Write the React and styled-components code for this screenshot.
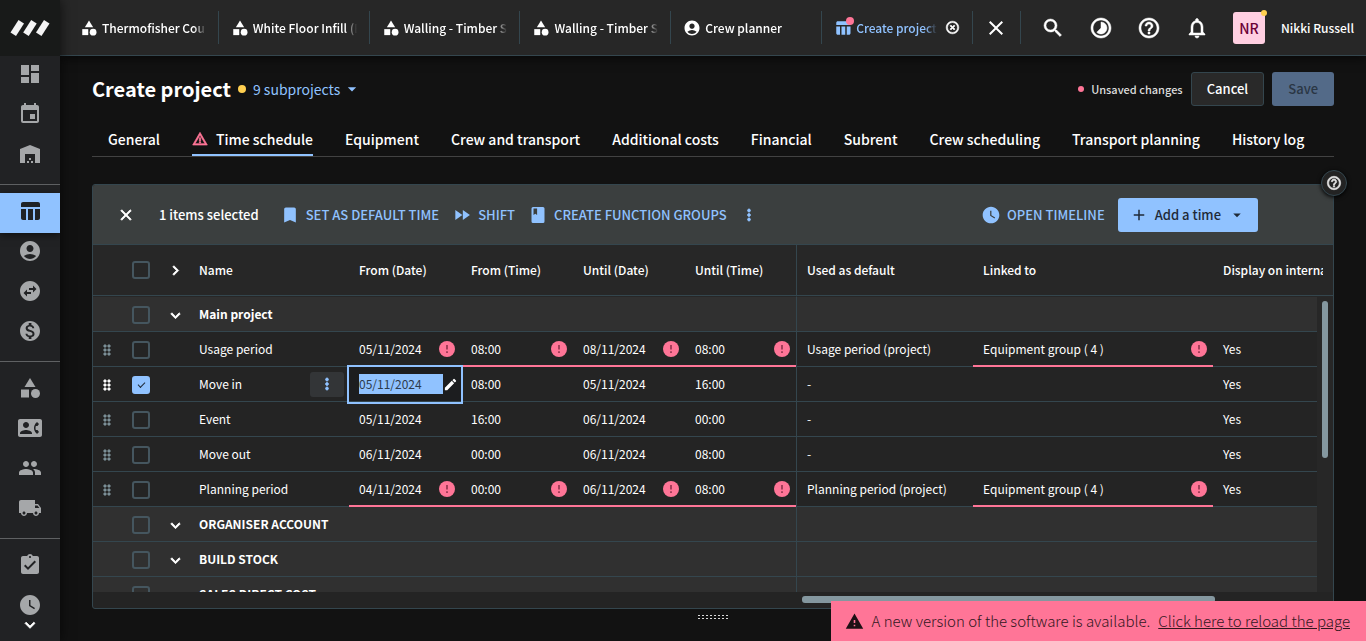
import React from "react";
import styled, { createGlobalStyle, css } from "styled-components";
import {
  MdAccountCircle,
  MdAdd,
  MdArrowDropDown,
  MdAssignmentTurnedIn,
  MdBookmark,
  MdCategory,
  MdChevronRight,
  MdClose,
  MdContactPhone,
  MdDashboard,
  MdDragIndicator,
  MdEdit,
  MdEvent,
  MdExpandMore,
  MdFastForward,
  MdHelpOutline,
  MdHighlightOff,
  MdLocalShipping,
  MdMonetizationOn,
  MdMoreVert,
  MdNotificationsNone,
  MdPeople,
  MdSearch,
  MdSwapHorizontalCircle,
  MdTableChart,
  MdTimelapse,
  MdWarehouse,
  MdWarning,
  MdWarningAmber,
  MdWatchLater,
} from "react-icons/md";

const c = {
  page: "#121212",
  bar: "#272727",
  side: "#212224",
  line: "#34464e",
  blue: "#90c2ff",
  pink: "#ff7597",
  yellow: "#ffcf50",
  ink: "#1f2a38",
  row: "#242424",
  group: "#303030",
  thumb: "#84979f",
};

const heavyIcon = css`
  path:not([fill="none"]) {
    stroke: currentColor;
    stroke-width: 1px;
  }
`;

const Global = createGlobalStyle`
  *, *::before, *::after { box-sizing: border-box; }
  body {
    margin: 0;
    background: ${c.page};
    color: #fff;
    font: 500 12px/20px "Noto Sans CJK SC", "Noto Sans", sans-serif;
  }
  button, input { font: inherit; color: inherit; }
  button { border: 0; padding: 0; background: none; }
  a { color: inherit; text-decoration: none; }
  svg { display: block; flex: none; }
`;

const Shell = styled.div`
  display: flex;
  height: 100vh;
`;

const Sidebar = styled.nav`
  position: relative;
  z-index: 3;
  flex: none;
  width: 60px;
  overflow: hidden;
  background: ${c.side};
`;

const SideShade = styled.div`
  z-index: 2;
  display: flex;
  flex: none;
  box-shadow: 0 0 12px #000a;
`;

const LogoBox = styled.a`
  display: grid;
  place-items: center;
  height: 56px;
  background: #181a19;
`;

const SideGroup = styled.div`
  & + & {
    margin-top: 8px;
    padding-top: 8px;
    border-top: 1px solid #5f6163;
  }
`;

const SideItem = styled.a`
  display: flex;
  align-items: center;
  justify-content: center;
  height: 40px;
  padding-bottom: 4px;
  font-size: 24px;
  color: ${(p) => (p.$active ? "#1f2226" : "#a5a7a9")};
  background: ${(p) => (p.$active ? c.blue : "none")};
  box-shadow: ${(p) => (p.$active ? "0 2px 8px #0008" : "none")};
`;

const SideMore = styled.button`
  position: absolute;
  bottom: 6px;
  left: 20px;
  font-size: 20px;
  ${heavyIcon}
`;

const Page = styled.div`
  display: flex;
  flex: 1;
  flex-direction: column;
  min-width: 0;
`;

const TopBar = styled.header`
  position: relative;
  z-index: 1;
  display: flex;
  flex: none;
  align-items: center;
  height: 56px;
  padding-left: 8px;
  background: ${c.bar};
  border-bottom: 1px solid ${c.line};
  box-shadow: 0 2px 10px #000a;
`;

const OpenTab = styled.a`
  position: relative;
  display: flex;
  flex: 1;
  align-items: center;
  min-width: 0;
  height: 33px;
  padding: 0 12px;
  gap: 4px;
  border-right: 1px solid ${c.line};
  color: ${(p) => (p.$active ? c.blue : "#fff")};
  > svg { font-size: 18px; }
`;

const TabText = styled.span`
  flex: 1;
  overflow: hidden;
  white-space: nowrap;
  mask-image: linear-gradient(to left, transparent, #000 12px);
`;

const TabClose = styled.button`
  margin-left: 4px;
  font-size: 15px;
  color: #fff;
  ${heavyIcon}
`;

const Badge = styled.i`
  position: absolute;
  top: ${(p) => p.$top}px;
  left: ${(p) => p.$left}px;
  width: ${(p) => p.$size}px;
  height: ${(p) => p.$size}px;
  border-radius: 50%;
  background: ${(p) => p.$color};
`;

const CloseAll = styled.button`
  display: grid;
  place-items: center;
  width: 48px;
  height: 33px;
  border-right: 1px solid ${c.line};
  font-size: 24px;
`;

const TopActions = styled.div`
  display: flex;
  align-items: center;
  gap: 24px;
  padding: 0 24px 0 20px;
  font-size: 24px;
  ${heavyIcon}
  path:not([fill="none"]) { stroke-width: 0.5px; }
`;

const Account = styled.button`
  display: flex;
  align-items: center;
  gap: 16px;
  padding-right: 12px;
  white-space: nowrap;
`;

const Avatar = styled.span`
  position: relative;
  display: grid;
  place-items: center;
  width: 32px;
  height: 32px;
  border-radius: 3px;
  background: #ffcfe1;
  color: #6b0035;
  font-size: 14px;
`;

const Main = styled.main`
  position: relative;
  display: flex;
  flex: 1;
  flex-direction: column;
  min-height: 0;
  padding: 16px 32px 32px;
`;

const TitleRow = styled.div`
  display: flex;
  align-items: center;
`;

const Title = styled.h1`
  margin: 0;
  font-size: 20px;
  line-height: 32px;
  font-weight: 700;
`;

const Dot = styled.i`
  width: ${(p) => p.$size}px;
  height: ${(p) => p.$size}px;
  margin: 0 7px;
  border-radius: 50%;
  background: ${(p) => p.$color};
`;

const Subprojects = styled.button`
  display: flex;
  align-items: center;
  gap: 2px;
  margin-right: auto;
  color: ${c.blue};
  font-size: 14px;
  font-weight: 400;
  svg { font-size: 20px; }
`;

const Unsaved = styled.span`
  font-size: 11px;
  color: #dcdcdc;
`;

const Button = styled.button`
  display: flex;
  align-items: center;
  height: 34px;
  margin-left: 8px;
  padding: 0 15px;
  border: 1px solid ${(p) => (p.$plain ? c.line : "transparent")};
  border-radius: 3px;
  background: ${(p) => (p.$plain ? "#292929" : c.blue)};
  color: ${(p) => (p.$plain ? "#fff" : c.ink)};
  font-size: 13px;
  white-space: nowrap;
  &:disabled { background: #536a88; color: #2a3644; }
`;

const SectionTabs = styled.nav`
  display: flex;
  gap: 32px;
  margin: 18px 0 27px;
  padding-left: 16px;
  border-bottom: 1px solid #424242;
`;

const SectionTab = styled.a`
  display: flex;
  align-items: center;
  gap: 8px;
  height: 32px;
  border-bottom: 2px solid ${(p) => (p.$active ? c.blue : "transparent")};
  font-size: 14px;
  white-space: nowrap;
  svg { font-size: 16px; color: ${c.pink}; }
  ${heavyIcon}
`;

const Panel = styled.section`
  position: relative;
  display: flex;
  flex: 1;
  flex-direction: column;
  min-height: 0;
  border: 1px solid ${c.line};
  border-radius: 3px;
  background: ${c.row};
`;

const HelpButton = styled.button`
  position: absolute;
  top: -15px;
  right: -14px;
  display: grid;
  place-items: center;
  width: 26px;
  height: 26px;
  border: 1px solid ${c.line};
  border-radius: 50%;
  background: #232323;
  box-shadow: 0 1px 4px #000;
  font-size: 16px;
  color: #e4e4e4;
  ${heavyIcon}
`;

const Toolbar = styled.div`
  display: flex;
  flex: none;
  align-items: center;
  gap: 13px;
  height: 60px;
  padding: 0 75px 0 24px;
  border-bottom: 1px solid ${c.line};
  border-radius: 2px 2px 0 0;
  background: #3b3f3f;
  font-size: 13px;
`;

const Selected = styled.span`
  margin: 0 8px 0 11px;
`;

const ToolButton = styled.button`
  display: flex;
  align-items: center;
  gap: 6px;
  margin-left: ${(p) => (p.$push ? "auto" : 0)};
  color: ${(p) => (p.$light ? "#fff" : c.blue)};
  text-transform: uppercase;
  white-space: nowrap;
  svg { width: ${(p) => p.$icon || 20}px; height: ${(p) => p.$icon || 20}px; }
  ${(p) => p.$icon && heavyIcon}
`;

const AddButton = styled(Button)`
  gap: 7px;
  margin: 0;
  padding: 0 11px;
  svg { font-size: 18px; }
`;

const Viewport = styled.div`
  flex: 1;
  min-height: 0;
  margin-bottom: 16px;
  overflow: hidden;
`;

const Table = styled.table`
  width: 100%;
  table-layout: fixed;
  border-collapse: separate;
  border-spacing: 0;

  tbody tr:first-child td {
    height: 36px;
    border-top: 1px solid ${c.bar};
  }
`;

const Head = styled.th`
  height: 51px;
  padding: 0 ${(p) => p.$pad ?? 10}px;
  overflow: hidden;
  white-space: nowrap;
  text-align: left;
  font-weight: 500;
  background: ${c.bar};
  border-bottom: 1px solid ${c.line};
  border-left: ${(p) => (p.$rule ? `1px solid ${c.line}` : 0)};
`;

const HeadText = styled.span`
  display: block;
  overflow: hidden;
`;

const Cell = styled.td`
  height: 35px;
  padding: 0 10px;
  overflow: hidden;
  white-space: nowrap;
  font-weight: 400;
  color: #fff;
  background: ${(p) => (p.$group ? c.group : c.row)};
  border-bottom: ${(p) => (p.$error ? `2px solid ${c.pink}` : `1px solid ${c.line}`)};
  border-left: ${(p) => (p.$rule ? `1px solid ${c.line}` : 0)};
  ${(p) => p.$editing && css`
    outline: 2px solid ${c.blue};
    background: #1c1d1f;
  `}
`;

const IconCell = styled(Cell)`
  padding: 2px 0 0;
`;

const GroupName = styled.strong`
  font-weight: 700;
`;

const Gutter = styled.td`
  background: ${c.bar};
`;

const Center = styled.span`
  display: flex;
  align-items: center;
  justify-content: center;
`;

const Handle = styled(Center)`
  font-size: 16px;
  color: ${(p) => (p.$on ? "#fff" : "#7d9199")};
  ${heavyIcon}
`;

const Toggle = styled.button`
  display: flex;
  margin: 0 auto;
  font-size: 19px;
  color: #fff;
  ${heavyIcon}
`;

const Check = styled.input`
  display: grid;
  place-items: center;
  width: 18px;
  height: 18px;
  margin: 0 auto;
  appearance: none;
  border: 2px solid #45565f;
  border-radius: 3px;
  &:checked { border-color: ${c.blue}; background: ${c.blue}; }
  &:checked::after {
    content: "";
    width: 7px;
    height: 4px;
    margin-bottom: 2px;
    border: solid ${c.ink};
    border-width: 0 0 1px 1px;
    rotate: -45deg;
  }
`;

const Split = styled.span`
  display: flex;
  align-items: center;
  justify-content: space-between;
  margin-right: -4px;
`;

const RowMenu = styled.button`
  display: grid;
  place-items: center;
  width: 34px;
  height: 25px;
  margin-right: -1px;
  border-radius: 3px;
  background: #333537;
  color: ${c.blue};
  font-size: 18px;
  ${heavyIcon}
`;

const DateInput = styled.input`
  width: 84px;
  height: 20px;
  padding: 0;
  border: 0;
  outline: 0;
  background: ${c.blue};
  color: #2d3b4c;
`;

const EditRow = styled.span`
  display: flex;
  align-items: center;
  margin-right: -10px;
  svg { font-size: 15px; color: #fff; }
`;

const ThumbY = styled.div`
  position: absolute;
  top: 116px;
  right: 5px;
  width: 6px;
  height: 37%;
  border-radius: 3px;
  background: ${c.thumb};
`;

const ScrollX = styled.div`
  position: absolute;
  right: 118px;
  bottom: 5px;
  left: 709px;
  height: 7px;
  border-radius: 3px;
  background: ${c.thumb};
`;

const Grip = styled.div`
  position: absolute;
  bottom: 21px;
  left: 50%;
  width: 32px;
  height: 6px;
  margin-left: -16px;
  background: radial-gradient(circle, #d8d8d8 1px, transparent 1px) 0 0 / 4px 3px;
`;

const Notice = styled.div`
  position: fixed;
  right: 0;
  bottom: 0;
  z-index: 5;
  display: flex;
  align-items: center;
  gap: 8px;
  height: 40px;
  padding: 0 16px 0 14px;
  background: ${c.pink};
  color: #33171e;
  font-size: 15px;
  font-weight: 300;
  white-space: nowrap;
  svg { font-size: 19px; color: #1d1014; }
  a { text-decoration: underline; }
`;

const LogoMark = () => (
  <svg width="40" height="16" viewBox="0 0 40 16" fill="#f4f4f4" aria-hidden="true">
    <path d="M8.500 0l5.500 3.500-8 12.500L.500 12.500z" />
    <path d="M21.200 0l5.500 3.500-8 12.500-5.500-3.500z" />
    <path d="M34 0l5.500 3.500-8 12.500-5.500-3.500z" />
  </svg>
);

const BookIcon = () => (
  <svg viewBox="0 0 20 20" fill="currentColor" aria-hidden="true">
    <path
      fillRule="evenodd"
      d="M5 2h10a1.500 1.500 0 0 1 1.500 1.500v13a1.500 1.500 0 0 1-1.500 1.500H5a1.500 1.500 0 0 1-1.500-1.500v-13A1.500 1.500 0 0 1 5 2zm.500 1.500v6.500l1.800-1.200L9.100 10V3.500z"
    />
  </svg>
);

const ErrorIcon = () => (
  <svg width="16" height="16" viewBox="0 0 16 16" aria-label="Error" role="img">
    <circle cx="8" cy="8" r="8" fill={c.pink} />
    <path d="M8 4v4.600M8 10.300v1.700" stroke="#7d2840" strokeWidth="1.400" />
  </svg>
);

const sideGroups = [
  [["Dashboard", MdDashboard], ["Calendar", MdEvent], ["Warehouse", MdWarehouse]],
  [["Projects", MdTableChart, true], ["Crew planner", MdAccountCircle], ["Subrental", MdSwapHorizontalCircle], ["Invoices", MdMonetizationOn]],
  [["Equipment", MdCategory], ["Contacts", MdContactPhone], ["Crew", MdPeople], ["Vehicles", MdLocalShipping]],
  [["Tasks", MdAssignmentTurnedIn], ["Time registration", MdWatchLater]],
];

const openTabs = [
  ["Thermofisher Court", MdCategory],
  ["White Floor Infill (Black)", MdCategory],
  ["Walling - Timber Single", MdCategory],
  ["Walling - Timber Single", MdCategory],
  ["Crew planner", MdAccountCircle],
];

const sections = ["General", "Time schedule", "Equipment", "Crew and transport", "Additional costs", "Financial", "Subrent", "Crew scheduling", "Transport planning", "History log"];

const rows = [
  { group: "Main project" },
  { name: "Usage period", times: ["05/11/2024", "08:00", "08/11/2024", "08:00"], used: "Usage period (project)", linked: "Equipment group ( 4 )", error: true },
  { name: "Move in", times: ["05/11/2024", "08:00", "05/11/2024", "16:00"], used: "-", selected: true },
  { name: "Event", times: ["05/11/2024", "16:00", "06/11/2024", "00:00"], used: "-" },
  { name: "Move out", times: ["06/11/2024", "00:00", "06/11/2024", "08:00"], used: "-" },
  { name: "Planning period", times: ["04/11/2024", "00:00", "06/11/2024", "08:00"], used: "Planning period (project)", linked: "Equipment group ( 4 )", error: true },
  { group: "ORGANISER ACCOUNT" },
  { group: "BUILD STOCK" },
  { group: "SALES DIRECT COST" },
];

const columnWidths = [28, 40, 28, 160, 112, 112, 112, 111, 177, 240, undefined, 16];

const GroupRow = ({ name }) => (
  <tr>
    <IconCell $group />
    <IconCell $group><Check type="checkbox" aria-label={`Select ${name}`} /></IconCell>
    <IconCell $group><Toggle aria-label={`Collapse ${name}`}><MdExpandMore /></Toggle></IconCell>
    <Cell $group colSpan={5}><GroupName>{name}</GroupName></Cell>
    <Cell $group $rule colSpan={3} />
    <Gutter />
  </tr>
);

const ErrorValue = ({ children, error }) =>
  error ? <Split>{children}<ErrorIcon /></Split> : children || null;

const TimeRow = ({ row }) => (
  <tr>
    <IconCell><Handle $on={row.selected}><MdDragIndicator /></Handle></IconCell>
    <IconCell><Check type="checkbox" aria-label={`Select ${row.name}`} defaultChecked={row.selected} /></IconCell>
    <IconCell />
    <Cell>
      {row.selected ? (
        <Split>{row.name}<RowMenu aria-label="Row actions"><MdMoreVert /></RowMenu></Split>
      ) : row.name}
    </Cell>
    {row.times.map((time, i) => {
      const editing = row.selected && i === 0;
      return (
        <Cell key={i} $error={row.error} $editing={editing}>
          {editing ? (
            <EditRow><DateInput aria-label="From (Date)" defaultValue={time} /><MdEdit /></EditRow>
          ) : <ErrorValue error={row.error}>{time}</ErrorValue>}
        </Cell>
      );
    })}
    <Cell $rule>{row.used}</Cell>
    <Cell $error={row.error}><ErrorValue error={row.error}>{row.linked}</ErrorValue></Cell>
    <Cell>Yes</Cell>
    <Gutter />
  </tr>
);

export default function App() {
  return (
    <Shell>
      <Global />
      <SideShade>
        <Sidebar aria-label="Modules">
          <LogoBox href="#home" aria-label="Home"><LogoMark /></LogoBox>
          {sideGroups.map((group, i) => (
            <SideGroup key={i}>
              {group.map(([label, Icon, active]) => (
                <SideItem key={label} href="#module" aria-label={label} $active={active}><Icon /></SideItem>
              ))}
            </SideGroup>
          ))}
          <SideMore aria-label="More modules"><MdExpandMore /></SideMore>
        </Sidebar>
      </SideShade>
      <Page>
        <TopBar>
          {openTabs.map(([label, Icon], i) => (
            <OpenTab key={i} href="#tab"><Icon /><TabText>{label}</TabText></OpenTab>
          ))}
          <OpenTab as="div" $active>
            <MdTableChart />
            <Badge $top={6} $left={24} $size={8} $color={c.pink} />
            <TabText>Create project</TabText>
            <TabClose aria-label="Close tab"><MdHighlightOff /></TabClose>
          </OpenTab>
          <CloseAll aria-label="Close all tabs"><MdClose /></CloseAll>
          <TopActions>
            <button aria-label="Search"><MdSearch /></button>
            <button aria-label="Timer"><MdTimelapse /></button>
            <button aria-label="Help"><MdHelpOutline /></button>
            <button aria-label="Notifications"><MdNotificationsNone /></button>
          </TopActions>
          <Account>
            <Avatar>NR<Badge $top={-2} $left={28} $size={6} $color={c.yellow} /></Avatar>
            Nikki Russell
          </Account>
        </TopBar>
        <Main>
          <TitleRow>
            <Title>Create project</Title>
            <Dot $size={8} $color={c.yellow} />
            <Subprojects>9 subprojects<MdArrowDropDown /></Subprojects>
            <Dot $size={6} $color={c.pink} />
            <Unsaved>Unsaved changes</Unsaved>
            <Button $plain>Cancel</Button>
            <Button disabled>Save</Button>
          </TitleRow>
          <SectionTabs aria-label="Project sections">
            {sections.map((name, i) => (
              <SectionTab key={name} href="#section" $active={i === 1}>
                {i === 1 && <MdWarningAmber />}
                {name}
              </SectionTab>
            ))}
          </SectionTabs>
          <Panel>
            <Toolbar>
              <ToolButton $light $icon={18} aria-label="Clear selection"><MdClose /></ToolButton>
              <Selected>1 items selected</Selected>
              <ToolButton><MdBookmark />Set as default time</ToolButton>
              <ToolButton><MdFastForward />Shift</ToolButton>
              <ToolButton><BookIcon />Create function groups</ToolButton>
              <ToolButton $icon={18} aria-label="More actions"><MdMoreVert /></ToolButton>
              <ToolButton $push><MdWatchLater />Open timeline</ToolButton>
              <AddButton><MdAdd />Add a time<MdArrowDropDown /></AddButton>
            </Toolbar>
            <Viewport>
              <Table>
                <colgroup>
                  {columnWidths.map((width, i) => <col key={i} width={width} />)}
                </colgroup>
                <thead>
                  <tr>
                    <Head $pad={0} />
                    <Head $pad={0}><Check type="checkbox" aria-label="Select all" /></Head>
                    <Head $pad={0}><Toggle aria-label="Expand all"><MdChevronRight /></Toggle></Head>
                    <Head>Name</Head>
                    <Head>From (Date)</Head>
                    <Head>From (Time)</Head>
                    <Head>Until (Date)</Head>
                    <Head>Until (Time)</Head>
                    <Head $rule>Used as default</Head>
                    <Head>Linked to</Head>
                    <Head colSpan={2}><HeadText>Display on internal planning</HeadText></Head>
                  </tr>
                </thead>
                <tbody>
                  {rows.map((row, i) =>
                    row.group ? <GroupRow key={i} name={row.group} /> : <TimeRow key={i} row={row} />
                  )}
                </tbody>
              </Table>
            </Viewport>
            <ThumbY />
            <ScrollX />
            <HelpButton aria-label="Help for this page"><MdHelpOutline /></HelpButton>
          </Panel>
          <Grip />
        </Main>
      </Page>
      <Notice role="status">
        <MdWarning />
        A new version of the software is available.
        <a href="#reload">Click here to reload the page</a>
      </Notice>
    </Shell>
  );
}
